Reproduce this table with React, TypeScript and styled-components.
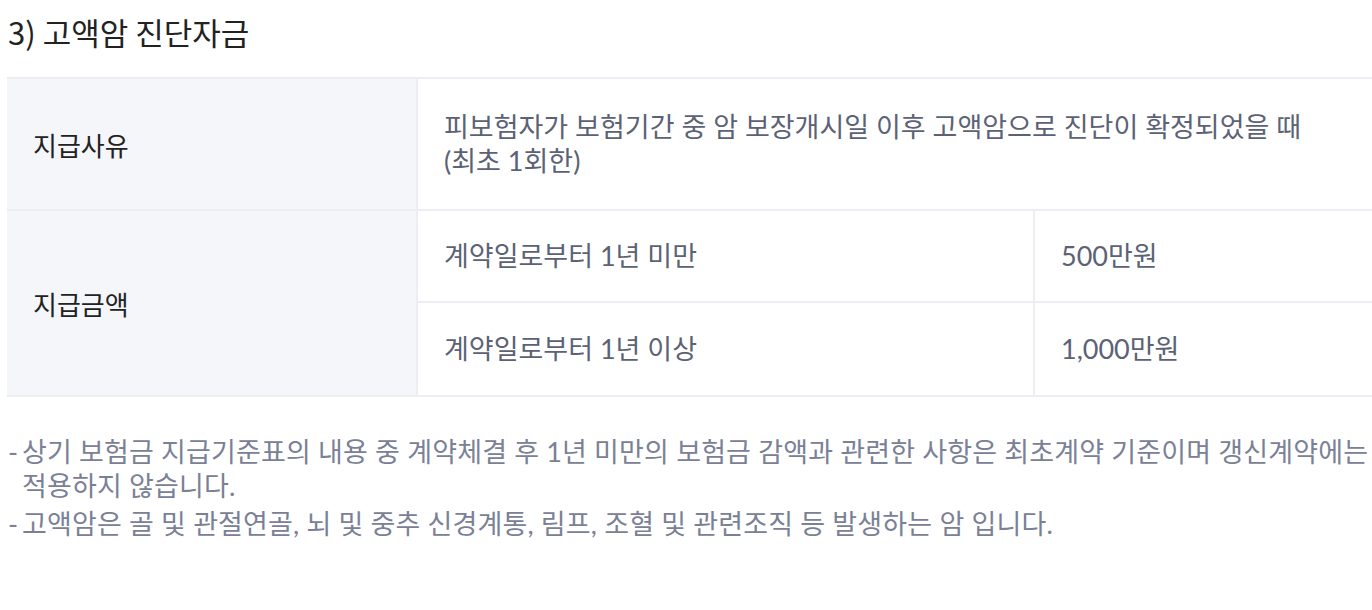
import React from 'react';
import styled, { createGlobalStyle } from 'styled-components';

const GlobalStyle = createGlobalStyle`
  html, body {
    margin: 0;
    padding: 0;
    background: #fff;
    overflow: hidden;
  }
  body {
    font-family: Lato, 'Noto Sans CJK KR', sans-serif;
  }
`;

const Page = styled.div`
  padding: 14px 0 0 8px;
  width: 1380px;
`;

const Title = styled.h3`
  margin: 0;
  font-family: 'Noto Sans CJK KR', sans-serif;
  font-size: 31px;
  font-weight: 400;
  line-height: 36px;
  color: #222;
`;

const Table = styled.div`
  display: grid;
  grid-template-columns: 411px 615px 1fr;
  grid-template-rows: 132px 92px 94px;
  margin: 27px 0 0 -1px;
  border-top: 2px solid #eceef3;
`;

const Head = styled.div<{ $span?: number }>`
  grid-row: span ${({ $span }) => $span ?? 1};
  display: flex;
  align-items: center;
  padding: 0 26px;
  background: #f5f6fa;
  border-bottom: 2px solid #eceef3;
  border-right: 2px solid #eceef3;
  font-family: 'Noto Sans CJK KR', sans-serif;
  font-size: 26px;
  color: #222;
`;

const Cell = styled.div<{ $wide?: boolean; $divided?: boolean }>`
  grid-column: ${({ $wide }) => ($wide ? 'span 2' : 'auto')};
  display: flex;
  align-items: center;
  padding: 0 26px;
  border-bottom: 2px solid #eceef3;
  border-left: ${({ $divided }) => ($divided ? '2px solid #eceef3' : 'none')};
  font-size: 27px;
  line-height: 34px;
  color: #5b6275;
`;

const Notes = styled.ul`
  list-style: none;
  width: 1370px;
  margin: 38px 0 0;
  padding: 0;
`;

const Note = styled.li`
  position: relative;
  padding-left: 14px;
  margin-bottom: 4px;
  font-size: 27px;
  line-height: 34px;
  letter-spacing: 0.15px;
  color: #7a8196;
  &::before {
    content: '-';
    position: absolute;
    left: 0;
  }
`;

export default function App() {
  return (
    <Page>
      <GlobalStyle />
      <Title>3) 고액암 진단자금</Title>
      <Table>
        <Head>지급사유</Head>
        <Cell $wide>
          피보험자가 보험기간 중 암 보장개시일 이후 고액암으로 진단이 확정되었을 때
          <br />
          (최초 1회한)
        </Cell>
        <Head $span={2}>지급금액</Head>
        <Cell>계약일로부터 1년 미만</Cell>
        <Cell $divided>500만원</Cell>
        <Cell>계약일로부터 1년 이상</Cell>
        <Cell $divided>1,000만원</Cell>
      </Table>
      <Notes>
        <Note>
          상기 보험금 지급기준표의 내용 중 계약체결 후 1년 미만의 보험금 감액과 관련한 사항은 최초계약 기준이며 갱신계약에는 적용하지 않습니다.
        </Note>
        <Note>고액암은 골 및 관절연골, 뇌 및 중추 신경계통, 림프, 조혈 및 관련조직 등 발생하는 암 입니다.</Note>
      </Notes>
    </Page>
  );
}
